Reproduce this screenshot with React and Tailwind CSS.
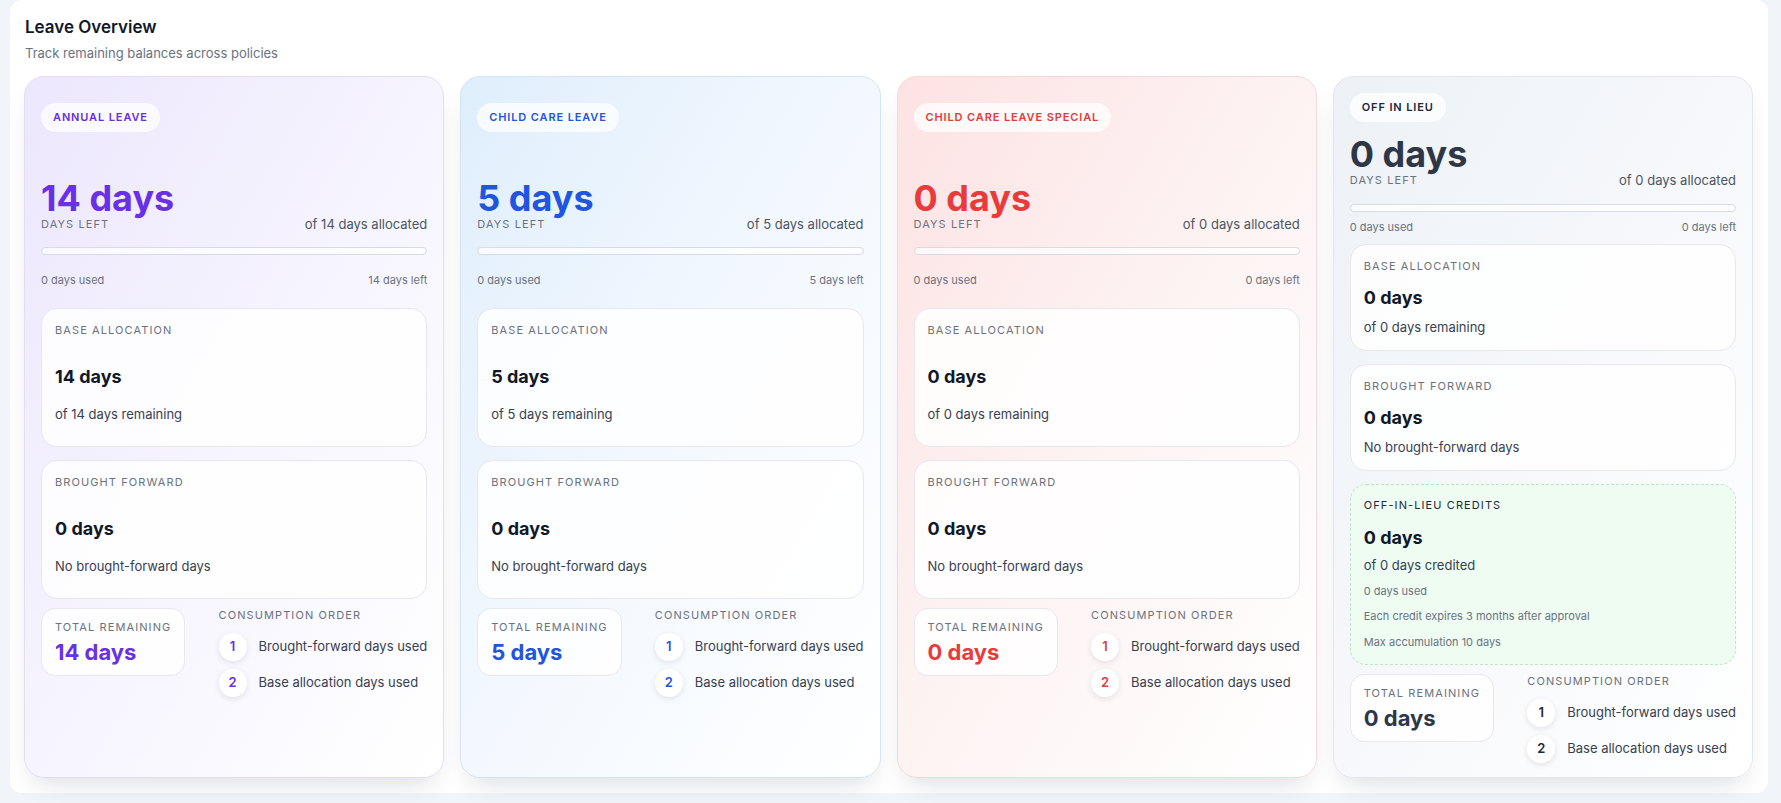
import React from "react";

const CARDS = [
  {
    badge: "ANNUAL LEAVE",
    days: 14,
    expanded: true,
    cardCls: "border-[#e2ddf4] from-[#ece7fd] via-[#f6f4fe] to-white",
    badgeCls: "text-[#6a2ee0]",
    accentCls: "text-[#6a30e6]",
    numCls: "text-[#6a2ee0]",
  },
  {
    badge: "CHILD CARE LEAVE",
    days: 5,
    expanded: true,
    cardCls: "border-[#d5e4f3] from-[#dfeefc] via-[#f3f8fe] to-white",
    badgeCls: "text-[#2354dc]",
    accentCls: "text-[#2155e0]",
    numCls: "text-[#2354dc]",
  },
  {
    badge: "CHILD CARE LEAVE SPECIAL",
    days: 0,
    expanded: true,
    cardCls: "border-[#f3d9d9] from-[#fde2e3] via-[#fdf3f3] to-white",
    badgeCls: "text-[#e23b3b]",
    accentCls: "text-[#e83c3c]",
    numCls: "text-[#e23b3b]",
  },
  {
    badge: "OFF IN LIEU",
    days: 0,
    expanded: false,
    cardCls: "border-[#e2e7ee] from-[#edf1f6] via-[#f6f8fb] to-white",
    badgeCls: "text-[#1f2937]",
    accentCls: "text-[#2d3748]",
    numCls: "text-[#1f2937]",
  },
];

function InfoBox({ label, value, sub, expanded }) {
  return (
    <div
      className={
        "rounded-2xl border border-[#e6e8ee] bg-white/85 px-[13px] pt-[13px] " +
        (expanded ? "h-[139px]" : "h-[107px]")
      }
    >
      <div className="text-[11px] leading-4 tracking-[0.1em] text-[#6b7280]">{label}</div>
      <div
        className={
          "text-lg leading-7 font-bold text-[#111827] " + (expanded ? "mt-[25px]" : "mt-[10px]")
        }
      >
        {value}
      </div>
      <div
        className={
          "text-[13px] leading-5 text-[#374151] " + (expanded ? "mt-[13px]" : "mt-[5px]")
        }
      >
        {sub}
      </div>
    </div>
  );
}

function Card({ c }) {
  const ex = c.expanded;
  return (
    <div
      className={
        "flex flex-col rounded-[20px] border bg-linear-to-br px-4 shadow-[0_14px_26px_-10px_rgba(15,23,42,0.16)] " +
        c.cardCls +
        (ex ? " pt-[26px]" : " pt-4")
      }
    >
      <div className="flex">
        <span
          className={
            "flex h-[29px] items-center rounded-full bg-white/75 px-3 text-[11px] font-semibold tracking-[0.08em] " +
            c.badgeCls
          }
        >
          {c.badge}
        </span>
      </div>

      <div className={"flex items-end justify-between " + (ex ? "mt-[48px]" : "mt-[14px]")}>
        <div>
          <div className={"text-4xl leading-9 font-bold " + c.accentCls}>{c.days} days</div>
          <div className="text-[11px] leading-4 tracking-[0.1em] text-[#6b7280]">DAYS LEFT</div>
        </div>
        <div className="text-[13px] leading-4 text-[#4b5563]">of {c.days} days allocated</div>
      </div>

      <div className={"h-2 rounded-full border border-[#d6dbe4] bg-white/70 " + (ex ? "mt-[15px]" : "mt-4")} />

      <div
        className={
          "flex justify-between text-[11px] leading-4 text-[#6b7280] " + (ex ? "mt-[17px]" : "mt-[7px]")
        }
      >
        <span>0 days used</span>
        <span>{c.days} days left</span>
      </div>

      <div className={ex ? "mt-5" : "mt-[9px]"}>
        <InfoBox
          label="BASE ALLOCATION"
          value={`${c.days} days`}
          sub={`of ${c.days} days remaining`}
          expanded={ex}
        />
      </div>
      <div className="mt-[13px]">
        <InfoBox label="BROUGHT FORWARD" value="0 days" sub="No brought-forward days" expanded={ex} />
      </div>

      {!ex && (
        <div className="mt-[13px] h-[181px] rounded-2xl border border-dashed border-[#bfe6cb] bg-[#eefcf2] px-[13px] pt-3">
          <div className="text-[11px] leading-4 tracking-[0.1em] text-[#1f2937]">OFF-IN-LIEU CREDITS</div>
          <div className="mt-[11px] text-lg leading-7 font-bold text-[#111827]">0 days</div>
          <div className="mt-[3px] text-[13px] leading-5 text-[#374151]">of 0 days credited</div>
          <div className="mt-2 text-[11px] leading-4 text-[#6b7280]">0 days used</div>
          <div className="mt-[9px] text-[11px] leading-4 text-[#6b7280]">
            Each credit expires 3 months after approval
          </div>
          <div className="mt-[10px] text-[11px] leading-4 text-[#6b7280]">Max accumulation 10 days</div>
        </div>
      )}

      <div className="mt-[9px] flex items-start justify-between pb-[14px]">
        <div className="rounded-[14px] border border-[#e6e8ee] bg-white/85 px-[13px] pt-[10px] pb-2">
          <div className="text-[11px] leading-4 tracking-[0.1em] text-[#6b7280]">TOTAL REMAINING</div>
          <div className={"mt-[2px] text-[22px] leading-[30px] font-bold " + c.accentCls}>{c.days} days</div>
        </div>
        <div className="-mt-px">
          <div className="text-[11px] leading-4 tracking-[0.1em] text-[#6b7280]">CONSUMPTION ORDER</div>
          <div className="mt-[10px] flex items-center gap-3">
            <span
              className={
                "flex size-7 items-center justify-center rounded-full bg-white text-[13px] font-semibold shadow-[0_2px_6px_rgba(15,23,42,0.10)] " +
                c.numCls
              }
            >
              1
            </span>
            <span className="text-[13px] text-[#374151]">Brought-forward days used</span>
          </div>
          <div className="mt-2 flex items-center gap-3">
            <span
              className={
                "flex size-7 items-center justify-center rounded-full bg-white text-[13px] font-semibold shadow-[0_2px_6px_rgba(15,23,42,0.10)] " +
                c.numCls
              }
            >
              2
            </span>
            <span className="text-[13px] text-[#374151]">Base allocation days used</span>
          </div>
        </div>
      </div>
    </div>
  );
}

export default function App() {
  return (
    <div
      className="min-h-screen bg-[#f1f4f9] pr-[13px] pb-[11px] pl-[10px]"
      style={{ fontFamily: "Inter, 'Noto Sans', sans-serif" }}
    >
      <div className="rounded-xl bg-white pt-[15px] pr-[15px] pb-[15px] pl-[14px]">
        <h1 className="pl-px text-[17px] leading-6 font-semibold text-[#111827]">Leave Overview</h1>
        <p className="mt-1 pl-px text-[13px] leading-5 text-[#6b7280]">Track remaining balances across policies</p>
        <div className="mt-[13px] grid grid-cols-4 gap-4">
          {CARDS.map((c) => (
            <Card key={c.badge} c={c} />
          ))}
        </div>
      </div>
    </div>
  );
}
